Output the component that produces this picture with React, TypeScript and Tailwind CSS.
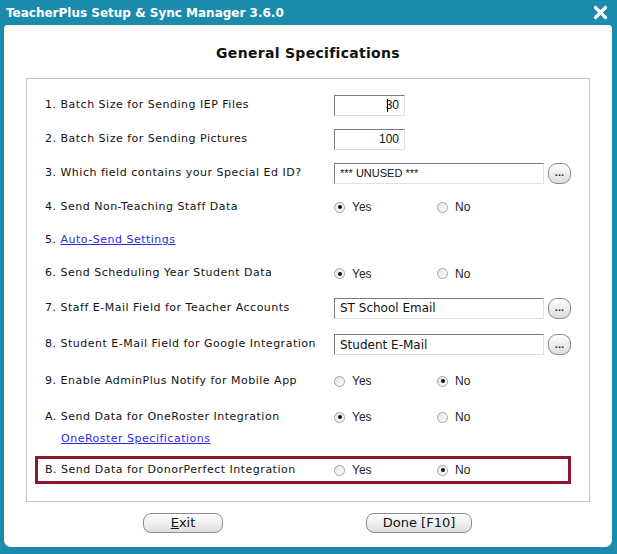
import React from 'react';

const labelFont = { fontFamily: '"DejaVu Sans", Verdana, sans-serif' };

const Radio = ({ checked, label }: { checked?: boolean; label: string }) => (
  <div className="flex items-center gap-[7px] text-[12px] text-[#222]" style={{ fontFamily: '"Liberation Sans", Arial, sans-serif' }}>
    <span className="w-[11px] h-[11px] rounded-full border border-[#a4a4a4] bg-gradient-to-br from-[#e2e2e2] to-white flex items-center justify-center">
      {checked && <span className="w-[4px] h-[4px] rounded-full bg-[#111]" />}
    </span>
    <span>{label}</span>
  </div>
);

const RadioPair = ({ yes }: { yes: boolean }) => (
  <div className="flex items-center">
    <div className="w-[103px]"><Radio checked={yes} label="Yes" /></div>
    <Radio checked={!yes} label="No" />
  </div>
);

const TextBox = ({ value, width, right, font, size }: { value: string; width: number; right?: boolean; font?: string; size?: string }) => (
  <div
    className={`h-[21px] bg-white border border-t-[#7a7a7a] border-l-[#7a7a7a] border-b-[#e0e0e0] border-r-[#e0e0e0] flex items-center px-[5px] ${size ?? 'text-[12px]'} text-[#111] ${right ? 'justify-end' : ''}`}
    style={{ width, fontFamily: font ?? '"Liberation Sans", Arial, sans-serif' }}
  >
    {value}
  </div>
);

const Ellipsis = () => (
  <div className="ml-[4px] w-[23px] h-[21px] rounded-[9px] border border-[#8a8a8a] bg-gradient-to-b from-white to-[#dcdcdc] flex items-center justify-center text-[11px] font-bold text-[#333] leading-none pb-[3px]">
    ...
  </div>
);

const Row = ({ h, label, children }: { h: string; label: React.ReactNode; children?: React.ReactNode }) => (
  <div className={`flex items-center ${h}`}>
    <div className="w-[289px] text-[11px] text-[#111] whitespace-nowrap tracking-[0.5px]" style={labelFont}>{label}</div>
    <div className="flex items-center">{children}</div>
  </div>
);

const PillButton = ({ children, width }: { children: React.ReactNode; width: string }) => (
  <div
    className={`${width} h-[20px] rounded-[8px] border border-[#8c8c8c] bg-gradient-to-b from-white to-[#dedede] flex items-center justify-center text-[13px] text-[#111]`}
    style={{ fontFamily: '"DejaVu Sans", Tahoma, sans-serif' }}
  >
    {children}
  </div>
);

export default function App() {
  return (
    <div className="w-[617px] h-[554px] bg-[#1a8aad] flex flex-col overflow-hidden">
      <div className="h-[25px] flex items-center justify-between pl-[6px] pr-[9px]">
        <span className="text-white font-bold text-[12px]" style={labelFont}>
          TeacherPlus Setup &amp; Sync Manager 3.6.0
        </span>
        <svg width="15" height="15" viewBox="0 0 15 15">
          <path d="M2.5 2.5 L12.5 12.5 M12.5 2.5 L2.5 12.5" stroke="white" strokeWidth="3.2" strokeLinecap="round" />
        </svg>
      </div>
      <div className="ml-[4px] mr-[5px] h-[522px] bg-white rounded-t-[4px] rounded-b-[7px] flex flex-col">
        <div className="h-[53px] flex items-center justify-center pt-[3px]">
          <span className="font-bold text-[14px] text-[#111] tracking-[0.3px]" style={labelFont}>General Specifications</span>
        </div>
        <div className="ml-[22px] mr-[22px] h-[424px] border border-[#c4c4c4] flex flex-col pt-[9px] pl-[18px]">
          <Row h="h-[34px]" label="1. Batch Size for Sending IEP Files">
            <div className="relative">
              <TextBox value="30" width={71} right />
              <span className="absolute left-[53px] top-[4px] w-px h-[13px] bg-black" />
            </div>
          </Row>
          <Row h="h-[34px]" label="2. Batch Size for Sending Pictures">
            <TextBox value="100" width={71} right />
          </Row>
          <Row h="h-[34px]" label="3. Which field contains your Special Ed ID?">
            <TextBox value="*** UNUSED ***" width={210} size="text-[11px]" />
            <Ellipsis />
          </Row>
          <Row h="h-[34px]" label="4. Send Non-Teaching Staff Data">
            <RadioPair yes />
          </Row>
          <Row
            h="h-[33px]"
            label={
              <span>
                5. <span className="text-[#2a2ae8] underline">Auto-Send Settings</span>
              </span>
            }
          />
          <Row h="h-[33px]" label="6. Send Scheduling Year Student Data">
            <RadioPair yes />
          </Row>
          <Row h="h-[36px]" label="7. Staff E-Mail Field for Teacher Accounts">
            <TextBox value="ST School Email" width={210} font='"DejaVu Sans", sans-serif' />
            <Ellipsis />
          </Row>
          <Row h="h-[37px]" label="8. Student E-Mail Field for Google Integration">
            <TextBox value="Student E-Mail" width={210} font='"DejaVu Sans", sans-serif' />
            <Ellipsis />
          </Row>
          <Row h="h-[36px]" label="9. Enable AdminPlus Notify for Mobile App">
            <RadioPair yes={false} />
          </Row>
          <div className="h-[3px]" />
          <Row h="h-[30px]" label="A. Send Data for OneRoster Integration">
            <RadioPair yes />
          </Row>
          <div className="h-[14px] flex items-center pl-[16px] text-[11px] text-[#2a2ae8] underline tracking-[0.5px]" style={labelFont}>
            OneRoster Specifications
          </div>
          <div className="mt-[10px] -ml-[10px] w-[536px] h-[28px] border-[3px] border-[#8c1a2c] flex items-center pl-[7px]">
            <div className="w-[289px] text-[11px] text-[#111] whitespace-nowrap tracking-[0.5px]" style={labelFont}>
              B. Send Data for DonorPerfect Integration
            </div>
            <RadioPair yes={false} />
          </div>
        </div>
        <div className="flex-1 flex items-center pb-[4px]">
          <div className="ml-[139px]">
            <PillButton width="w-[80px]">
              <span><span className="underline">E</span>xit</span>
            </PillButton>
          </div>
          <div className="ml-[143px]">
            <PillButton width="w-[106px]">Done [F10]</PillButton>
          </div>
        </div>
      </div>
    </div>
  );
}
